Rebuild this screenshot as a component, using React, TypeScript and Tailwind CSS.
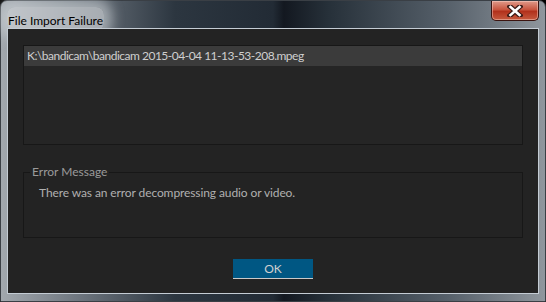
import React from 'react';

const App: React.FC = () => {
  return (
    <div className="w-[546px] h-[302px] bg-black">
      <div
        className="relative w-[546px] h-[302px] rounded-t-[7px] border border-[#3a3f45] flex flex-col px-[6px] pb-[7px] bg-[linear-gradient(90deg,#a2a8ae_0%,#6f7780_14%,#2c3640_32%,#222b35_50%,#131820_52%,#263039_60%,#56606a_82%,#8f969d_100%)]"
        style={{ fontFamily: 'Lato, "Open Sans", sans-serif' }}
      >
        {/* Title bar */}
        <div className="h-[27px] flex items-start">
          <div className="mt-[6px] px-[1px] rounded-[8px] bg-[#d8dcdf]/60 shadow-[0_0_12px_8px_rgba(215,220,224,0.55)]">
            <span className="text-[12px] leading-[16px] text-black">File Import Failure</span>
          </div>
          <div className="ml-auto w-[48px] h-[20px] rounded-b-[5px] border border-[#3b1410] border-t-0 bg-[linear-gradient(180deg,#e09a8a_0%,#c8553f_45%,#b2311c_55%,#c65a3f_100%)] shadow-[inset_0_0_0_1px_rgba(255,220,210,0.45)] flex items-center justify-center">
            <svg width="16" height="12" viewBox="0 0 16 12">
              <path d="M3 1.5 L13 10.5 M13 1.5 L3 10.5" stroke="#3a1a16" strokeWidth="5" strokeLinecap="square" />
              <path d="M3.5 2 L12.5 10 M12.5 2 L3.5 10" stroke="#ffffff" strokeWidth="2.6" strokeLinecap="square" />
            </svg>
          </div>
        </div>

        {/* Client area */}
        <div className="flex-1 border border-[#c4ccd4] bg-[#232323] px-[15px] pt-[16px] flex flex-col">
          <div className="h-[100px] border border-[#171717] bg-[#252525]">
            <div className="h-[20px] bg-[#3b3b3b] px-[3px] flex items-center">
              <span className="text-[12px] text-[#cfcfcf] tracking-[-0.5px]">K:\bandicam\bandicam 2015-04-04 11-13-53-208.mpeg</span>
            </div>
          </div>

          <div className="mt-[27px] h-[66px] border border-[#171717] relative">
            <span className="absolute left-[6px] top-[-9px] bg-[#232323] px-[2px] text-[12px] leading-[16px] text-[#9a9a9a]">
              Error Message
            </span>
            <div className="pl-[15px] pt-[11px] text-[12px] text-[#b0b0b0] tracking-[-0.1px]">
              There was an error decompressing audio or video.
            </div>
          </div>

          <div className="mt-[21px] flex justify-center">
            <div className="w-[80px] h-[20px] bg-[#005783] border-b border-[#c9c9c9] flex items-center justify-center">
              <span className="text-[12px] text-[#d0d0d0]">OK</span>
            </div>
          </div>
        </div>
      </div>
    </div>
  );
};

export default App;
